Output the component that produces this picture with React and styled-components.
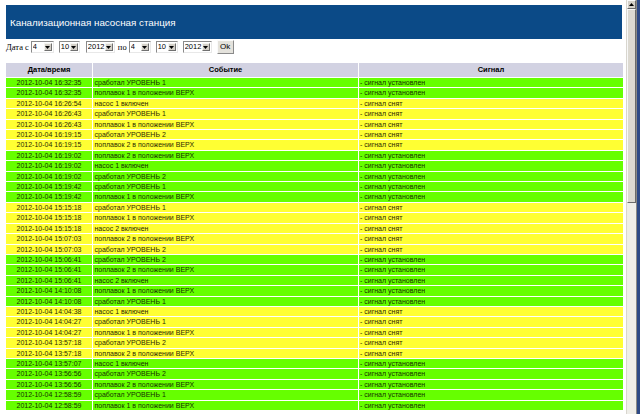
import React from "react";
import styled, { createGlobalStyle } from "styled-components";

const GlobalStyle = createGlobalStyle`
  html, body { margin: 0; padding: 0; background: #ffffff; overflow: hidden; }
  #root { width: 640px; height: 414px; }
`;

const Window = styled.div`
  display: flex;
  width: 640px;
  height: 414px;
  overflow: hidden;
`;

const Page = styled.main`
  flex: 1;
  min-width: 0;
  padding: 5px 4px 0 6px;
  display: flex;
  flex-direction: column;
`;

const Banner = styled.header`
  height: 34px;
  background: #0b4a87;
  display: flex;
  align-items: center;
  padding: 0 4px;
`;

const Title = styled.h1`
  margin: 0;
  color: #ffffff;
  font: 400 9.8px/1 "Liberation Sans", Arial, sans-serif;
  padding-top: 1px;
`;

const FilterForm = styled.form`
  display: flex;
  align-items: center;
  height: 14px;
  margin-top: 1px;
  font: 400 8.5px/1 "Liberation Serif", "Times New Roman", serif;
  color: #000;
`;

const Label = styled.span`
  margin-right: ${(p) => p.$mr || 2}px;
  margin-left: ${(p) => p.$ml || 0}px;
`;

const SelectBox = styled.span`
  position: relative;
  display: inline-flex;
  box-sizing: border-box;
  width: ${(p) => p.$w}px;
  height: 12px;
  margin-right: ${(p) => p.$mr ?? 5}px;
  border: 1px solid;
  border-color: #8a8a8a #e8e8e8 #e8e8e8 #8a8a8a;
  background: #ffffff;
`;

const NativeSelect = styled.select`
  appearance: none;
  -webkit-appearance: none;
  width: 100%;
  height: 100%;
  border: none;
  outline: none;
  background: transparent;
  padding: 0 0 0 1px;
  margin: 0;
  font: 400 7.5px/10px "Liberation Sans", Arial, sans-serif;
  color: #000;
`;

const ArrowButton = styled.span`
  position: absolute;
  top: 1px;
  right: 1px;
  bottom: 1px;
  width: 8px;
  box-sizing: border-box;
  background: #d4d0c8;
  border: 1px solid;
  border-color: #f4f4f0 #707070 #707070 #f4f4f0;
  display: flex;
  align-items: center;
  justify-content: center;
  pointer-events: none;
`;

const OkButton = styled.button`
  box-sizing: border-box;
  height: 14px;
  width: 17px;
  padding: 0;
  margin-left: 1px;
  background: #e4e2dc;
  border: 1px solid;
  border-color: #fafafa #8a8a8a #8a8a8a #fafafa;
  font: 400 8px/1 "Liberation Sans", Arial, sans-serif;
  color: #000;
`;

const LogTable = styled.div`
  margin-top: 9px;
  display: grid;
  grid-template-columns: 86px 265px 264px;
  grid-template-rows: 14px;
  grid-auto-rows: 9.42px;
  gap: 1px;
  font-family: "Liberation Sans", Arial, sans-serif;
`;

const HeadCell = styled.div`
  background: #d2d2e2;
  font: 700 7.5px/14px "Liberation Sans", Arial, sans-serif;
  color: #000;
  text-align: center;
  white-space: nowrap;
`;

const Cell = styled.div`
  background: ${(p) => (p.$on ? "#66ff00" : "#ffff33")};
  color: ${(p) => (p.$on ? "#143000" : "#2e2900")};
  font: 400 7px/9.42px "Liberation Sans", Arial, sans-serif;
  text-align: ${(p) => (p.$center ? "center" : "left")};
  padding-left: ${(p) => (p.$center ? 0 : p.$pl || 1)}px;
  white-space: nowrap;
  overflow: hidden;
`;

const Scrollbar = styled.div`
  width: 10px;
  display: flex;
  flex-direction: column;
  background: #efeee9;
  border-left: 1px solid #d8d6ce;
  box-sizing: border-box;
`;

const ScrollButton = styled.div`
  height: 9px;
  box-sizing: border-box;
  background: #d4d0c8;
  border: 1px solid;
  border-color: #f8f8f8 #6a6a6a #6a6a6a #f8f8f8;
  display: flex;
  align-items: center;
  justify-content: center;
`;

const Thumb = styled.div`
  height: 194px;
  box-sizing: border-box;
  background: #dcd9d1;
  border: 1px solid;
  border-color: #f8f8f8 #6a6a6a #6a6a6a #f8f8f8;
`;

const Frame = styled.div`
  width: 3px;
  background: #2e4a86;
  border-left: 1px solid #8b8a86;
`;

const Arrow = ({ up }) => (
  <svg width="5" height="3" viewBox="0 0 5 3">
    <polygon points={up ? "2.5,0 5,3 0,3" : "0,0 5,0 2.5,3"} fill="#000" />
  </svg>
);

const Select = ({ value, options, w, mr }) => (
  <SelectBox $w={w} $mr={mr}>
    <NativeSelect defaultValue={value}>
      {options.map((o) => (
        <option key={o}>{o}</option>
      ))}
    </NativeSelect>
    <ArrowButton>
      <Arrow />
    </ArrowButton>
  </SelectBox>
);

const days = Array.from({ length: 31 }, (_, i) => String(i + 1));
const months = Array.from({ length: 12 }, (_, i) => String(i + 1));
const years = ["2011", "2012", "2013"];

const L1 = "сработал УРОВЕНЬ 1";
const L2 = "сработал УРОВЕНЬ 2";
const F1 = "поплавок 1 в положении ВЕРХ";
const F2 = "поплавок 2 в положении ВЕРХ";
const P1 = "насос 1 включен";
const P2 = "насос 2 включен";

const rows = [
  ["16:32:35", L1, 1],
  ["16:32:35", F1, 1],
  ["16:26:54", P1, 0],
  ["16:26:43", L1, 0],
  ["16:26:43", F1, 0],
  ["16:19:15", L2, 0],
  ["16:19:15", F2, 0],
  ["16:19:02", F2, 1],
  ["16:19:02", P1, 1],
  ["16:19:02", L2, 1],
  ["15:19:42", L1, 1],
  ["15:19:42", F1, 1],
  ["15:15:18", L1, 0],
  ["15:15:18", F1, 0],
  ["15:15:18", P2, 0],
  ["15:07:03", F2, 0],
  ["15:07:03", L2, 0],
  ["15:06:41", L2, 1],
  ["15:06:41", F2, 1],
  ["15:06:41", P2, 1],
  ["14:10:08", F1, 1],
  ["14:10:08", L1, 1],
  ["14:04:38", P1, 0],
  ["14:04:27", L1, 0],
  ["14:04:27", F1, 0],
  ["13:57:18", L2, 0],
  ["13:57:18", F2, 0],
  ["13:57:07", P1, 1],
  ["13:56:56", L2, 1],
  ["13:56:56", F2, 1],
  ["12:58:59", L1, 1],
  ["12:58:59", F1, 1],
];

export default function App() {
  return (
    <>
      <GlobalStyle />
      <Window>
        <Page>
          <Banner>
            <Title>Канализационная насосная станция</Title>
          </Banner>
          <FilterForm onSubmit={(e) => e.preventDefault()}>
            <Label>Дата с</Label>
            <Select value="4" options={days} w={23} />
            <Select value="10" options={months} w={21} mr={6} />
            <Select value="2012" options={years} w={29} mr={3} />
            <Label $mr={2}>по</Label>
            <Select value="4" options={days} w={22} mr={5} />
            <Select value="10" options={months} w={22} mr={5} />
            <Select value="2012" options={years} w={29} mr={4} />
            <OkButton type="submit">Ok</OkButton>
          </FilterForm>
          <LogTable role="table">
            <HeadCell role="columnheader">Дата/время</HeadCell>
            <HeadCell role="columnheader">Событие</HeadCell>
            <HeadCell role="columnheader">Сигнал</HeadCell>
            {rows.map(([t, ev, on], i) => (
              <React.Fragment key={i}>
                <Cell $on={on} $center>
                  2012-10-04 {t}
                </Cell>
                <Cell $on={on} $pl={1.5}>
                  {ev}
                </Cell>
                <Cell $on={on} $pl={1}>
                  - {on ? "сигнал установлен" : "сигнал снят"}
                </Cell>
              </React.Fragment>
            ))}
          </LogTable>
        </Page>
        <Scrollbar>
          <ScrollButton>
            <Arrow up />
          </ScrollButton>
          <Thumb />
        </Scrollbar>
        <Frame />
      </Window>
    </>
  );
}
